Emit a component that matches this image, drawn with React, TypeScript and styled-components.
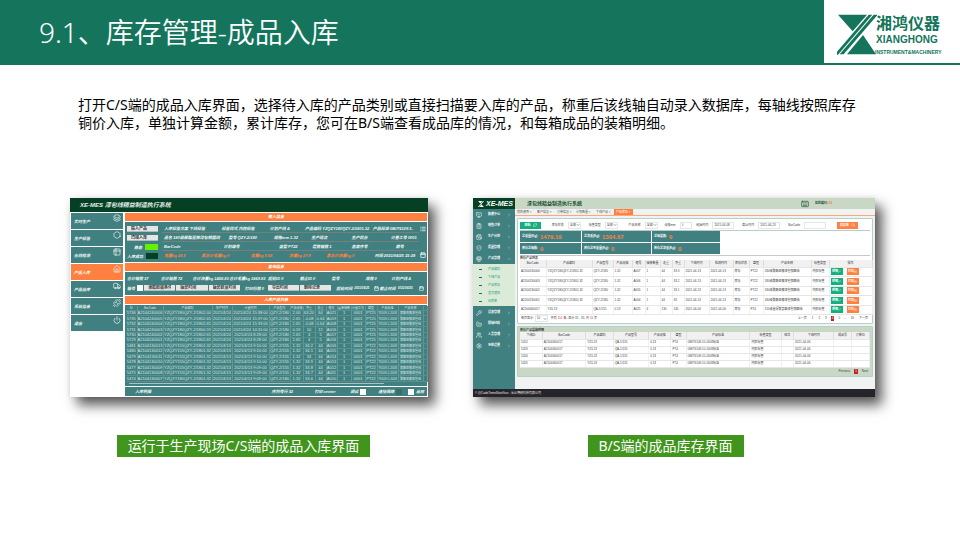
import React from "react";
import styled, { createGlobalStyle, css } from "styled-components";
import {
  Layers, Hexagon, Table2, House, Truck, Puzzle, Power, MonitorCheck, ClipboardList, CalendarClock,
  ShieldCheck, PackageOpen, Wrench, Factory, Users, Settings, ChevronRight, ChevronDown, Calendar, List,
  RefreshCw, Keyboard, Printer, Search, Pencil,
} from "lucide-react";

const sans = `"Noto Sans", "Noto Sans CJK SC", sans-serif`;
const tiny = `"Liberation Sans", "Noto Sans CJK SC", sans-serif`;

const Global = createGlobalStyle`
  *, *::before, *::after { box-sizing: border-box; }
  body { margin: 0; background: #fff; font-family: ${sans}; color: #000; }
  button, input, select { font: inherit; color: inherit; margin: 0; padding: 0; border: 0; border-radius: 0; background: none; min-width: 0; }
  select { appearance: none; }
  svg { display: block; flex: none; }
`;

/* ---------- slide ---------- */
const Header = styled.header`
  display: flex; justify-content: space-between; height: 65px; background: #15755c;
`;
const Title = styled.h1`
  margin: 0; padding-left: 39px; font: 350 28px/65px "Noto Sans", "Noto Sans CJK SC", sans-serif; color: #fff; white-space: nowrap;
`;
const Brand = styled.div`
  display: flex; align-items: flex-start; width: 136px; height: 63px; padding: 13px 0 0 13px; background: #fff;
`;
const BrandText = styled.div`
  display: flex; flex-direction: column; margin-left: -2px; color: #15755c; white-space: nowrap;
`;
const BrandName = styled.strong`font: 700 16px/19px "Noto Sans CJK SC", sans-serif; padding-left: 1px;`;
const BrandLatin = styled.strong`font: 700 10px/16px "Liberation Sans", sans-serif; padding-left: 1px;`;
const BrandSub = styled.span`font: 700 5px/8px "Liberation Sans", sans-serif;`;
const Intro = styled.p`
  margin: 31px 100px 0 78px; font-size: 14px; line-height: 18px;
`;
const Shots = styled.main`
  display: grid; grid-template-columns: 358fr 402fr; gap: 45px; padding: 66px 85px 0 70px;
`;
const Figure = styled.figure<{ $shift: number }>`
  display: flex; flex-direction: column; align-items: center; gap: 38px; margin: 0; min-width: 0;
  figcaption { margin-right: ${(p) => p.$shift}px; }
`;
const Caption = styled.figcaption`
  padding: 0 11px; background: #40961d; color: #fff; font-size: 14px; line-height: 22px; white-space: nowrap;
`;
const Window = styled.div`
  width: 100%; background: #fff; font: 4px/5px ${tiny}; white-space: nowrap;
  box-shadow: 7px 8px 12px rgba(0, 0, 0, 0.66), 0 0 5px rgba(0, 0, 0, 0.08);
`;

/* ---------- production client ---------- */
const ClientTitle = styled.div`
  height: 14px; padding-left: 10px; background: #064024; color: #e4eee8; font: italic 700 6px/15px ${tiny};
`;
const ClientBody = styled.div`
  display: grid; grid-template-columns: 52px 1fr; gap: 2px; padding: 1px; height: 185px;
`;
const ClientNav = styled.nav`display: flex; flex-direction: column; gap: 1px;`;
const ClientNavButton = styled.button<{ $on?: boolean }>`
  display: flex; justify-content: space-between; align-items: center; height: 16px; padding: 0 2px 0 3px;
  background: ${(p) => (p.$on ? "#ff8040" : "#408080")}; color: #f2f8f6; font-style: italic; font-weight: 700;
  svg { align-self: flex-start; margin-top: 1px; }
`;
const ClientMain = styled.div`display: flex; flex-direction: column; gap: 1px; min-width: 0;`;
const Band = styled.h2`
  margin: 0; height: 8px; background: #ff8040; color: #fff; text-align: center; font: italic 700 4px/8px ${tiny};
`;
const TealPane = styled.section<{ $h: number }>`
  display: flex; height: ${(p) => p.$h}px; background: #408080; color: #f0f7f5; font-style: italic; font-weight: 700;
`;
const ControlColumn = styled.div`
  display: flex; flex-direction: column; gap: 3px; width: 37px; padding: 4px 4px 2px 2px;
`;
const Picker = styled.select<{ $w?: number }>`
  height: 6px; ${(p) => (p.$w ? css`flex: ${p.$w} 1 0;` : css`width: 100%;`)}
  padding: 0 4px; background: #e6e6e6; color: #444; font-style: normal; border-bottom: 1px solid #b4b9b9;
`;
const Status = styled.div<{ $c: string }>`
  display: flex; justify-content: flex-end; align-items: center; gap: 3px; height: 6px;
  &::after { content: ""; width: 13px; height: 6px; background: ${(p) => p.$c}; }
`;
const Lines = styled.div`flex: 1; min-width: 0; padding: 2px 0 0;`;
const Line = styled.div<{ $rule?: boolean; $orange?: boolean; $h?: number }>`
  display: flex; align-items: center; gap: ${(p) => (p.$h === 12 ? 1 : 0)}px; height: ${(p) => p.$h ?? 9}px; padding-left: 2px;
  color: ${(p) => (p.$orange ? "#ff8040" : "inherit")};
  border-bottom: ${(p) => (p.$rule ? "1px solid #75807a" : "0")};
`;
const Field = styled.span<{ $w: number; $white?: boolean }>`
  flex: ${(p) => p.$w} 1 0; min-width: 0; ${(p) => p.$white && "color:#f0f7f5;"}
`;
const IconColumn = styled.div`
  display: flex; flex-direction: column; justify-content: space-between; width: 8px; padding: 4px 1px;
`;
const FieldLabel = styled.label<{ $w: number; $indent?: number }>`
  display: flex; align-items: center; gap: 2px; flex: ${(p) => p.$w} 1 0; min-width: 0; padding-left: ${(p) => p.$indent ?? 0}px;
`;
const SmallInput = styled.input<{ $bg?: string }>`
  width: 6px; height: 6px; background: ${(p) => p.$bg ?? "#fff"};
`;
const DateInput = styled.input`width: 19px; height: 5px; font: italic 700 3px/5px ${tiny};`;
const ClientGrid = styled.table`
  width: 100%; height: 76px; border-collapse: collapse; table-layout: fixed; font: 400 4px/4px ${tiny};
  th, td { padding: 0; border-right: 1px solid #639797; border-bottom: 1px solid #578f8f; text-align: center; overflow: hidden; font-weight: 400; color: #dbe9e7; }
  th, td:nth-child(14), td:nth-child(15) { font-size: 3px; }
`;
const GridPane = styled(TealPane)`flex-direction: column; padding: 1px 1px 0;`;
const ScrollTrack = styled.div`
  height: 1px; margin: 1px 14% 0 3px; background: #aebfbd;
`;
const ClientFooter = styled.footer`
  display: flex; align-items: center; flex: 1; padding: 0 2px 0 10px; background: #408080; color: #f0f7f5;
  font-style: italic; font-weight: 700;
`;
const Col = styled.col<{ $w: number }>`width: ${(p) => p.$w}px;`;

const clientNav = [
  ["实时生产", Layers], ["生产标签", Hexagon], ["在线检测", Table2], ["产品入库", House],
  ["产品出库", Truck], ["系统信息", Puzzle], ["退出", Power],
] as const;

const infoLines: [number, string][][] = [
  [[57, "入库标签方案 下线标签"], [48, "标签样式 内腔标签"], [35, "计划产线 A"], [67, "产品编码 YZQZY180QZY-2/1801.32"], [46, "产品标准 GB/T6109.5-"]],
  [[64, "品名 180级聚酯亚胺漆包铜圆线"], [45, "型号 QZY-2/180"], [37, "规格mm 1.32"], [40, "生产班次"], [39, "生产机台"], [28, "计量工号 0001"]],
  [[59, "BarCode"], [55, "计划编号"], [33, "盘型 PT22"], [39, "层数轴数 1"], [44, "直度序号"], [23, "颜号"]],
  [[37, "毛重kg 28.5"], [49, "累总计毛重kg 0"], [38, "皮重kg 0.58"], [37, "净重kg 27.9"], [48, "累总计净重kg 0"], [44, "时间 2021/04/25 15:28"]],
];
const queryFields: [number, string][] = [
  [34, "合计轴数 37"], [32, "合计箱数 72"], [37, "合计净重kg 1468.83"], [39, "合计毛重kg 1669.83"], [32, "起始ID 0"],
  [32, "截止ID 0"], [34, "型号"], [26, "规格 0"], [36, "计划产线 A"],
];

const clientCols = [11, 26, 49, 20, 37, 21, 13, 12, 11, 11, 14, 14, 12, 21, 25, 4];
const clientHead = ["ID", "BarCode", "产品编码", "生产时间", "计量时间", "产品型号", "产品规格", "净重", "毛重", "箱号", "层装轴数", "计量工号", "盘型", "产品标准", "产品名称", ""];
const clientRaw = [
  "5736 A2104240006 2.00 24 15:38:00 180 2.00 63.20 64 A021",
  "5735 A2104240005 2.65 24 15:37:00 180 2.65 -0.08 0.64 A019",
  "5732 A2104240004 2.65 24 15:33:00 180 2.65 -0.08 0.64 A008",
  "5731 A2104240003 0.59 24 14:31:00 180 0.59 10 12 A016",
  "5730 A2104240002 2.65 24 8:28:00 180 2.65 4 5 A017",
  "5729 A2104240001 2.65 24 8:28:00 180 2.65 4 5 A016",
  "5481 A2104130013 1.32 13 9:10:00 155 1.32 34.2 44 A016",
  "5480 A2104130012 1.32 13 9:10:00 155 1.32 34.1 44 A015",
  "5479 A2104130011 1.32 13 9:10:00 155 1.32 34 44 A014",
  "5478 A2104130010 1.32 13 9:10:00 155 1.32 33.9 44 A013",
  "5477 A2104130009 1.32 13 9:09:00 155 1.32 33.8 44 A012",
  "5475 A2104130008 1.32 13 9:09:00 155 1.32 33.7 44 A011",
  "5474 A2104130007 1.32 13 9:09:00 180 1.32 33.6 44 A010",
];
const clientRows = clientRaw.map((raw) => {
  const [id, code, size, day, time, type, spec, net, gross, box] = raw.split(" ");
  return [id, code, `YZQZY${type}QZY-2/180${size}`, `2021/4/${day}`, `2021/4/${day} ${time}`, `QZY-2/${type}`, spec, net, gross, box,
    "1", "0001", day === "24" ? "PT25" : "PT22", "T6109.5-2008", "聚酯亚胺漆包线", ""];
});

const ProductionClient = () => (
  <Window>
    <ClientTitle>XE-MES 漆包线精益制造执行系统</ClientTitle>
    <ClientBody>
      <ClientNav>
        {clientNav.map(([name, Icon], i) => (
          <ClientNavButton key={name} type="button" $on={i === 3}>{name}<Icon size={8} strokeWidth={2} /></ClientNavButton>
        ))}
      </ClientNav>
      <ClientMain>
        <Band>输入信息</Band>
        <TealPane $h={40}>
          <ControlColumn>
            <Picker aria-label="输入产品"><option>输入产品</option></Picker>
            <Picker aria-label="扫描入库"><option>扫描入库</option></Picker>
            <Status $c="#66f000">稳态</Status>
            <Status $c="#064024">入库成功</Status>
          </ControlColumn>
          <Lines>
            {infoLines.map((line, i) => (
              <Line key={i} $rule={i < 3} $orange={i === 3}>
                {line.map(([w, text], j) => <Field key={j} $w={w} $white={text.startsWith("时间")}>{text}</Field>)}
              </Line>
            ))}
          </Lines>
          <IconColumn><List size={6} strokeWidth={3} /><Calendar size={6} strokeWidth={3} /></IconColumn>
        </TealPane>
        <Band>查询信息</Band>
        <TealPane $h={23}>
          <Lines>
            <Line $h={8}>{queryFields.map(([w, text]) => <Field key={text} $w={w}>{text}</Field>)}</Line>
            <Line $h={12}>
              <FieldLabel $w={16}>轴号<SmallInput /></FieldLabel>
              <Picker $w={23} aria-label="读取数据条件"><option>读取数据条件</option></Picker>
              <Picker $w={23} aria-label="轴装时间"><option>轴装时间</option></Picker>
              <Picker $w={23} aria-label="轴装数量时间"><option>轴装数量时间</option></Picker>
              <FieldLabel $w={22} $indent={4}>打印份数 0</FieldLabel>
              <Picker $w={23} aria-label="导出时间"><option>导出时间</option></Picker>
              <Picker $w={23} aria-label="删除记录"><option>删除记录</option></Picker>
              <FieldLabel $w={42} $indent={4}>起始时间<DateInput defaultValue="2021/04/25" /><Calendar size={5} strokeWidth={3} /></FieldLabel>
              <FieldLabel $w={47}>截止时间<DateInput defaultValue="2021/04/25" /><Calendar size={5} strokeWidth={3} /></FieldLabel>
            </Line>
          </Lines>
        </TealPane>
        <Band>入库产品列表</Band>
        <GridPane $h={81}>
          <ClientGrid>
            <colgroup>{clientCols.map((w, i) => <Col key={i} $w={w} />)}</colgroup>
            <thead><tr>{clientHead.map((h, i) => <th key={i}>{h}</th>)}</tr></thead>
            <tbody>{clientRows.map((r) => <tr key={r[0]}>{r.map((c, i) => <td key={i}>{c}</td>)}</tr>)}</tbody>
          </ClientGrid>
          <ScrollTrack />
        </GridPane>
        <ClientFooter>
          <Field $w={137}>入库明细</Field>
          <Field $w={43}>序列号行 32</Field>
          <Field $w={36}>打印 center</Field>
          <FieldLabel $w={28}>调试<SmallInput $bg="#fff" /></FieldLabel>
          <FieldLabel $w={30}>连接网络<SmallInput $bg="#387070" /></FieldLabel>
          <FieldLabel $w={17}><SmallInput $bg="#fff" />启用</FieldLabel>
        </ClientFooter>
      </ClientMain>
    </ClientBody>
  </Window>
);

/* ---------- web stock page ---------- */
const Web = styled.div`
  display: grid; grid-template: 11px 180px 8px / 42px 1fr; background: #f1f2f2; color: #444; font-size: 3px;
`;
const WebLogo = styled.div`
  display: flex; align-items: center; gap: 2px; padding-left: 5px; background: #064024; color: #fff; font: italic 700 7px/10px ${tiny};
`;
const WebTop = styled.div`
  display: flex; align-items: center; padding-left: 12px; background: #c9d8c4; color: #174f35; font-weight: 700;
`;
const WebName = styled.span`flex: 1; font-size: 5px;`;
const TopIcon = styled.span`margin-right: 6px;`;
const TopUser = styled.span`width: 60px; font-size: 3px; b { color: #ff7a3d; }`;
const WebNav = styled.nav`display: flex; flex-direction: column; background: #408080; color: #fff;`;
const WebNavButton = styled.button`
  display: grid; grid-template-columns: 12px 1fr 6px; align-items: center; height: 11px; padding: 0 2px 0 3px; text-align: left; font-weight: 700;
`;
const SubNav = styled.div`display: flex; flex-direction: column; background: #dcebd8; padding: 1px 0; margin-bottom: 1px;`;
const SubLink = styled.a`
  display: grid; grid-template-columns: 9px 1fr; height: 8px; line-height: 8px; padding-left: 6px; color: #12a184; text-decoration: none;
  &::before { content: ""; align-self: center; width: 3px; height: 1px; background: #12705c; }
`;
const WebMain = styled.div`display: flex; flex-direction: column; gap: 2px; min-width: 0;`;
const Tabs = styled.div`
  display: flex; align-items: center; height: 7px; padding-left: 2px; background: #f1f2f2; border-bottom: 1px solid #ffa77b;
`;
const Tab = styled.button<{ $on?: boolean; $w: number }>`
  width: ${(p) => p.$w}px; height: 6px; text-align: left; padding-left: ${(p) => (p.$on ? 2 : 0)}px;
  background: ${(p) => (p.$on ? "#ff8040" : "transparent")}; color: ${(p) => (p.$on ? "#fff" : "#555")};
`;
const Card = styled.section<{ $green?: boolean }>`
  margin: 0 2px; padding: 1px 2px; border: 1px solid #b5cfca; background: ${(p) => (p.$green ? "#c9d8c4" : "#fff")};
  border-radius: 1px;
`;
const Filters = styled.form`display: flex; align-items: center; height: 11px; border-bottom: 1px solid #b9ccca;`;
const Action = styled.button<{ $c: string; $w: number }>`
  display: inline-flex; align-items: center; justify-content: center; gap: 2px; width: ${(p) => p.$w}px; height: 7px;
  background: ${(p) => p.$c}; color: #fff; font-weight: 700;
`;
const Filter = styled.label<{ $w: number }>`
  display: flex; align-items: center; justify-content: flex-end; gap: 4px; flex: ${(p) => p.$w} 1 0; min-width: 0;
`;
const SelectBox = styled.span`
  display: inline-flex; align-items: center; width: 13px; height: 7px; border: 1px solid #e6e6e6; padding-left: 1px;
  select { flex: 1; width: 6px; }
`;
const FilterInput = styled.input<{ $w: number }>`width: ${(p) => p.$w}px; height: 7px; padding-left: 1px; border: 1px solid #e6e6e6;`;
const Stats = styled.div`
  display: grid; grid-template-columns: 61fr 69fr 68fr 149fr; grid-auto-rows: 11px; gap: 1px; padding-bottom: 1px; border-bottom: 1px solid #c4c9c9;
`;
const Stat = styled.div<{ $start?: boolean }>`
  display: flex; align-items: center; gap: 2px; padding-left: 2px; background: #408080; color: #fff; font-weight: 700;
  ${(p) => p.$start && "grid-column-start: 1;"}
  b { color: #ff8040; font-size: 6px; line-height: 8px; }
`;
const ListTitle = styled.h3`margin: 0; font: 700 3px/4px ${tiny}; color: #333;`;
const WebTable = styled.table<{ $h: number }>`
  width: 100%; height: ${(p) => p.$h}px; border-collapse: collapse; table-layout: fixed; background: #fff; font-size: 3px; line-height: 5px;
  border-bottom: 1px solid #bcbcbc;
  th, td { padding: 0 1px; overflow: hidden; font-weight: 400; border-bottom: 1px solid #e6e6e6; border-right: 1px solid #f1f1f1; text-align: left; }
  th { height: 7px; padding: 0; text-align: center; background: #f1f1f1; border-right-color: #ddd; color: #333; }
  td button { gap: 0; font-size: 3px; }
  td button + button { margin-left: 4px; }
`;
const Pager = styled.div<{ $h: number }>`
  display: flex; align-items: center; gap: 3px; height: ${(p) => p.$h}px; padding: 0 1px;
  button { padding: 0 1px; border: 0; }
  label { display: flex; align-items: center; gap: 1px; }
`;
const Current = styled.button`height: 5px; background: #c3202b; color: #fff; line-height: 5px;`;
const Spacer = styled.span<{ $w?: number }>`flex: ${(p) => p.$w ?? 1} 1 0; em { color: #e03a2a; font-style: normal; }`;
const WebFooter = styled.footer`
  grid-column: 1 / -1; padding-left: 2px; background: #26242a; color: #e8e8e8; font: 3px/9px ${tiny};
`;

const DropDown = ({ value }: { value: string }) => (
  <SelectBox><select><option>{value}</option></select><ChevronDown size={4} strokeWidth={3} /></SelectBox>
);

const BrandMark = ({ size, color }: { size: number; color: string }) => (
  <svg width={size} height={size} viewBox="0 0 120 120" fill={color}>
    <path d="M3 0H88L46 52Z" />
    <path d="M100 0H120L22 120H0Z" />
    <path d="M71 72L118 120H34Z" />
  </svg>
);

const enamel = "180级聚酯亚胺漆包铜圆线";
const stock = [
  ...[["A2104130004", "A007", "33.3"], ["A2104130003", "A006", "33.2"], ["A2104130002", "A005", "33.1"], ["A2104130001", "A004", "33"]].map(
    ([code, box, net]) => [code, "YZQZY180QZY-2/1801.32", "QZY-2/180", "1.32", box, "1", "44", net, "2021-04-13", "2021-04-13", "库存", "PT22", enamel, "内腔标签"],
  ),
  ["A2104060017", "YZ0.13", "QA-1/155", "0.13", "A025", "4", "130", "145", "2021-04-06", "2021-04-06", "库存", "PT4", "155级直焊聚氨酯漆包铜圆线", "内腔标签"],
];
const stockCols = [26, 46, 21, 19, 13, 15, 12, 12, 25, 24, 16, 14, 48, 18, 43];
const stockHead = ["BarCode", "产品编码", "产品型号", "产品规格", "箱号", "轴装数量", "毛重", "净重", "下线时间", "检测时间", "库存状态", "盘型", "产品名称", "标签类型", "操作"];
const boxCols = [22, 43, 27, 35, 22, 15, 63, 31, 12, 40, 17, 18];
const boxHead = ["下线ID", "BarCode", "产品编码", "产品型号", "产品规格", "盘型", "产品标准", "标签类型", "班次", "下线时间", "成品号", "订单ID"];
const tabs: [string, number][] = [["我的桌面 ×", 20], ["客户信息 ×", 20], ["订单信息 ×", 19], ["计划数量 ×", 20], ["下线产品 ×", 18]];
const navTop = [["数据中心", MonitorCheck], ["销售订单", ClipboardList], ["生产计划", CalendarClock], ["质量管理", ShieldCheck], ["产品管理", PackageOpen]] as const;
const navBottom = [["设备管理", Wrench], ["原辅材料", Factory], ["人员管理", Users], ["系统设置", Settings]] as const;

const StockPage = () => (
  <Window>
    <Web>
      <WebLogo><BrandMark size={6} color="#fff" />XE-MES</WebLogo>
      <WebTop>
        <WebName>漆包线精益制造执行系统</WebName>
        <TopIcon><Keyboard size={8} /></TopIcon>
        <TopUser>您的编码: <b>26</b></TopUser>
      </WebTop>
      <WebNav>
        {navTop.map(([name, Icon], i) => (
          <WebNavButton key={name} type="button"><Icon size={6} />{name}{i === 4 ? <ChevronDown size={4} /> : <ChevronRight size={4} />}</WebNavButton>
        ))}
        <SubNav>
          {["产品编码", "下线产品", "产品库存", "发货通知", "出库单"].map((n) => <SubLink key={n} href="#stock">{n}</SubLink>)}
        </SubNav>
        {navBottom.map(([name, Icon]) => (
          <WebNavButton key={name} type="button"><Icon size={6} />{name}<ChevronRight size={4} /></WebNavButton>
        ))}
      </WebNav>
      <WebMain>
        <Tabs>
          {tabs.map(([t, w]) => <Tab key={t} type="button" $w={w}>{t}</Tab>)}
          <Tab type="button" $on $w={19}>产品库存 ×</Tab>
        </Tabs>
        <Card>
          <Filters>
            <Action type="button" $c="#12b07c" $w={21}>刷新 <RefreshCw size={4} /></Action>
            <Filter $w={40}>库存状态<DropDown value="全部" /></Filter>
            <Filter $w={37}>标签类型<DropDown value="全部" /></Filter>
            <Filter $w={40}>产品名称<DropDown value="全部" /></Filter>
            <Filter $w={34}>规格mm<FilterInput $w={12} defaultValue="0" /></Filter>
            <Filter $w={43}>起始时间<FilterInput $w={22} defaultValue="2021-04-08" /></Filter>
            <Filter $w={46}>截止时间<FilterInput $w={22} defaultValue="2021-04-23" /></Filter>
            <Filter $w={46}>BarCode<FilterInput $w={22} /></Filter>
            <Spacer $w={11} />
            <Action type="button" $c="#ff8040" $w={21}>搜索库 <Search size={4} /></Action>
            <Spacer $w={12} />
          </Filters>
          <Stats>
            <Stat>总重量(Kg): <b>1479.19</b></Stat>
            <Stat>总净重(Kg): <b>1304.67</b></Stat>
            <Stat>总轴装数: <b>0</b></Stat>
            <Stat $start>库存总轴数: <b>0</b></Stat>
            <Stat>库存总毛重量(Kg): <b>0</b></Stat>
            <Stat>库存总净重(Kg): <b>0</b></Stat>
          </Stats>
          <ListTitle>库存产品列表</ListTitle>
          <WebTable $h={55}>
            <colgroup>{stockCols.map((w, i) => <Col key={i} $w={w} />)}</colgroup>
            <thead><tr>{stockHead.map((h) => <th key={h}>{h}</th>)}</tr></thead>
            <tbody>
              {stock.map((r) => (
                <tr key={r[0]}>
                  {r.map((c, i) => <td key={i}>{c}</td>)}
                  <td>
                    <Action type="button" $c="#12b07c" $w={12}>明细<Pencil size={3} /></Action>
                    <Action type="button" $c="#ff8040" $w={12}>打印<Printer size={3} /></Action>
                  </td>
                </tr>
              ))}
            </tbody>
          </WebTable>
          <Pager $h={7}>
            <label>每页显示: <DropDown value="10" /></label>
            <Spacer>共有 <em>152</em> 条, 显示 31 - 35, 共 <em>16</em> 页</Spacer>
            <button type="button">上一页</button><button type="button">1</button><button type="button">2</button><button type="button">3</button>
            <Current type="button">4</Current><button type="button">5</button><span>...</span><button type="button">16</button><button type="button">下一页</button>
          </Pager>
        </Card>
        <Card $green>
          <ListTitle>库存产品装箱明细</ListTitle>
          <WebTable $h={36}>
            <colgroup>{boxCols.map((w, i) => <Col key={i} $w={w} />)}</colgroup>
            <thead><tr>{boxHead.map((h) => <th key={h}>{h}</th>)}</tr></thead>
            <tbody>
              {["5202", "5203", "5204", "5205"].map((id) => (
                <tr key={id}>
                  {[id, "A2104060017", "YZ0.13", "QA-1/155", "0.13", "PT4", "GB/T6109.10-2008标准", "内腔标签", "", "2021-04-06", "", ""].map((c, i) => <td key={i}>{c}</td>)}
                </tr>
              ))}
            </tbody>
          </WebTable>
          <Pager $h={7}><Spacer /><button type="button">Previous</button><Current type="button">1</Current><button type="button">Next</button></Pager>
        </Card>
      </WebMain>
      <WebFooter>© @CodeTimesNowYear - 长沙博研科技有限公司</WebFooter>
    </Web>
  </Window>
);

const LogoMark = () => (
  <svg width="40" height="42" viewBox="0 0 120 126" fill="#15755c">
    <path d="M3 5H90L47 55Z" />
    <path d="M95 5H106L3 125H0V116Z" />
    <path d="M110 5H122L20 124H8Z" />
    <path d="M78 66L117 124H30Z" />
  </svg>
);

export default function App() {
  return (
    <>
      <Global />
      <Header>
        <Title>9.1、库存管理-成品入库</Title>
        <Brand>
          <LogoMark />
          <BrandText>
            <BrandName>湘鸿仪器</BrandName>
            <BrandLatin>XIANGHONG</BrandLatin>
            <BrandSub>INSTRUMENT&amp;MACHINERY</BrandSub>
          </BrandText>
        </Brand>
      </Header>
      <Intro>
        打开C/S端的成品入库界面，选择待入库的产品类别或直接扫描要入库的产品，称重后该线轴自动录入数据库，每轴线按照库存铜价入库，单独计算金额，累计库存，您可在B/S端查看成品库的情况，和每箱成品的装箱明细。
      </Intro>
      <Shots>
        <Figure $shift={11}><ProductionClient /><Caption>运行于生产现场C/S端的成品入库界面</Caption></Figure>
        <Figure $shift={17}><StockPage /><Caption>B/S端的成品库存界面</Caption></Figure>
      </Shots>
    </>
  );
}
